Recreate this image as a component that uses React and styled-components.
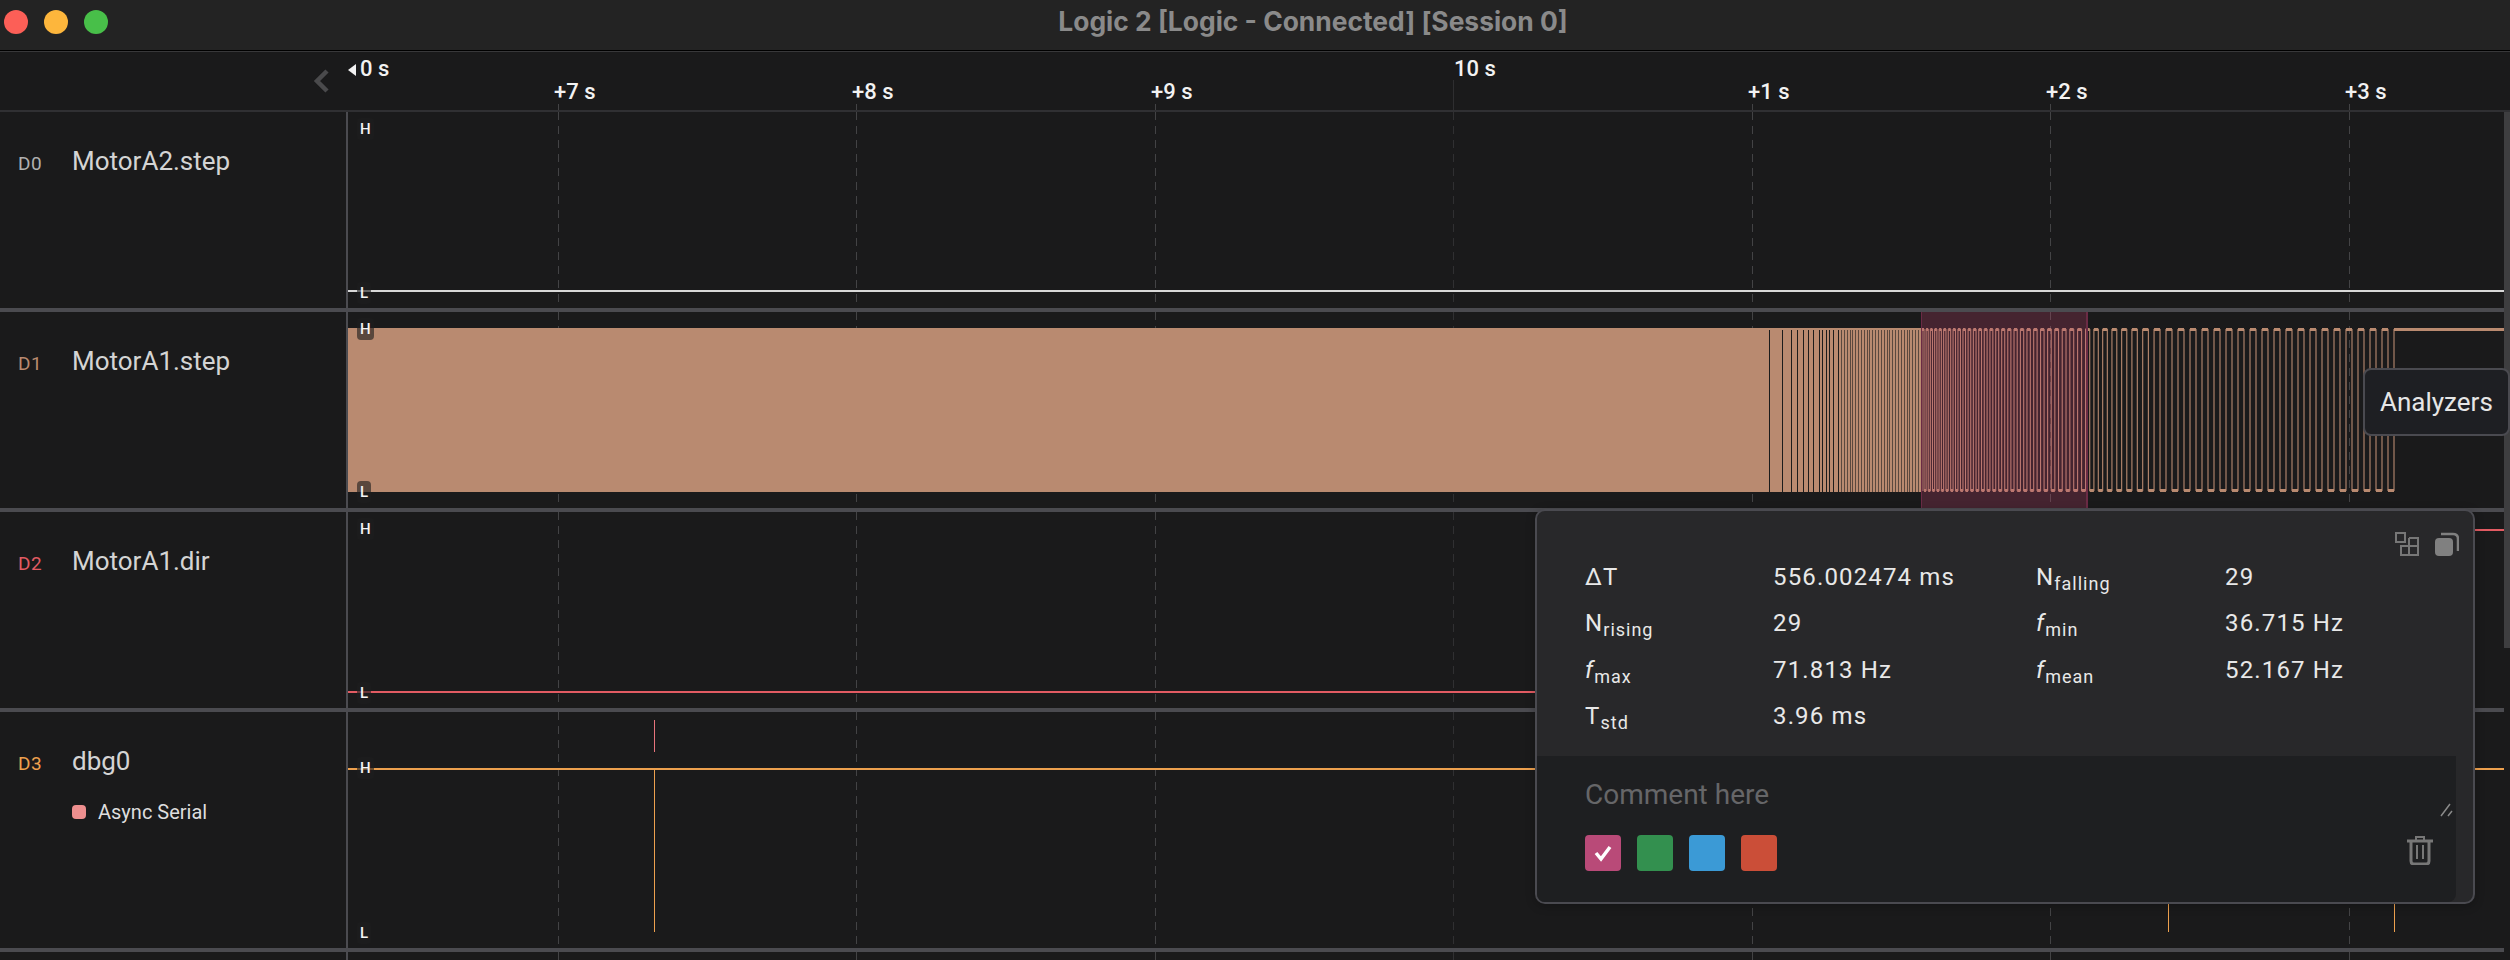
import React from "react";
import styled, { createGlobalStyle } from "styled-components";

const GRID_X = [558, 856, 1155, 1453, 1752, 2050, 2349];

const GlobalStyle = createGlobalStyle`
  html, body { margin: 0; padding: 0; background: #1a1a1b; }
  body { font-family: Roboto, "Liberation Sans", sans-serif; }
`;

const Page = styled.div`
  position: relative;
  width: 2510px;
  height: 960px;
  overflow: hidden;
  background: #1a1a1b;
  display: flex;
  flex-direction: column;
`;

const TitleBar = styled.div`
  height: 50px;
  flex: none;
  background: #232323;
  border-bottom: 1px solid #000;
  box-shadow: 0 1px 0 #38383a;
  display: flex;
  align-items: center;
  padding-left: 4px;
  gap: 16px;
  position: relative;
  z-index: 2;
`;

const Light = styled.span`
  width: 24px;
  height: 24px;
  border-radius: 50%;
  background: ${(p) => p.$color};
  margin-top: -6px;
`;

const Title = styled.div`
  position: absolute;
  left: 0;
  right: 0;
  top: 6px;
  text-align: center;
  padding-left: 116px;
  font-family: Inter, sans-serif;
  font-size: 26.4px;
  line-height: 30px;
  font-weight: 700;
  color: #8a8a8a;
`;

const Ruler = styled.div`
  position: relative;
  height: 58px;
  flex: none;
  margin-top: 1px;
  border-bottom: 2px solid #303033;
`;

const TimeLabel = styled.span`
  position: absolute;
  left: ${(p) => p.$x}px;
  top: ${(p) => p.$y}px;
  font-size: 22px;
  line-height: 26px;
  font-weight: 500;
  color: #f2f2f2;
`;

const Tick = styled.span`
  position: absolute;
  left: ${(p) => p.$x}px;
  bottom: 0;
  width: 1px;
  height: ${(p) => p.$h}px;
  background: ${(p) => p.$color};
`;

const Collapse = styled.svg`
  position: absolute;
  left: 312px;
  top: 17px;
`;

const StartMark = styled.svg`
  position: absolute;
  left: 348px;
  top: 11px;
`;

const Body = styled.div`
  flex: 1;
  display: flex;
  min-height: 0;
`;

const Tracks = styled.div`
  flex: 1;
  display: flex;
  flex-direction: column;
`;

const ScrollTrack = styled.div`
  width: 6px;
  flex: none;
`;

const ScrollThumb = styled.div`
  height: 536px;
  background: #3e3e40;
`;

const Row = styled.div`
  display: flex;
  flex: ${(p) => (p.$h ? "none" : "1")};
  height: ${(p) => (p.$h ? `${p.$h}px` : "auto")};
  box-sizing: border-box;
  border-bottom: ${(p) => (p.$h ? "4px solid #4b4b50" : "none")};
`;

const LabelCol = styled.div`
  width: 346px;
  flex: none;
  box-sizing: border-box;
  padding: 34px 0 0 18px;
`;

const Divider = styled.div`
  width: 2px;
  flex: none;
  background: #4b4b50;
`;

const NameLine = styled.div`
  display: flex;
  align-items: baseline;
  line-height: 30px;
`;

const Channel = styled.span`
  width: 54px;
  font-size: 19px;
  color: ${(p) => p.$color};
  letter-spacing: 0.6px;
`;

const Name = styled.span`
  font-size: 26px;
  color: #d4d4d4;
`;

const AnalyzerLine = styled.div`
  display: flex;
  align-items: center;
  gap: 12px;
  margin: 21px 0 0 54px;
  line-height: 24px;
  font-size: 20px;
  color: #dedede;
`;

const AnalyzerDot = styled.span`
  width: 14px;
  height: 14px;
  border-radius: 4px;
  background: #ee8f8f;
`;

const Trace = styled.div`
  position: relative;
  flex: 1;
  min-width: 0;
`;

const TraceSvg = styled.svg`
  display: block;
  width: 100%;
  height: 100%;
`;

const LevelTag = styled.span`
  position: absolute;
  left: 9px;
  top: ${(p) => p.$y - 11}px;
  height: 22px;
  padding: 0 3px;
  border-radius: 4px;
  background: rgba(30, 30, 30, 0.62);
  font-size: 15px;
  line-height: 22px;
  font-weight: 500;
  color: #f4f4f4;
`;

const Tooltip = styled.div`
  position: absolute;
  left: 2363px;
  top: 368px;
  width: 147px;
  height: 68px;
  box-sizing: border-box;
  background: #1e1f23;
  border: 2px solid #4a4a50;
  border-radius: 8px;
  padding-left: 15px;
  font-size: 26px;
  line-height: 64px;
  color: #e6e6e6;
`;

const Popup = styled.div`
  position: absolute;
  left: 1535px;
  top: 509px;
  width: 940px;
  height: 395px;
  box-sizing: border-box;
  background: #28282a;
  border: 2px solid #4a4a50;
  border-radius: 10px;
  display: flex;
  flex-direction: column;
  box-shadow: 0 2px 10px rgba(0, 0, 0, 0.25);
`;

const PopupTools = styled.div`
  position: absolute;
  top: 21px;
  right: 14px;
  display: flex;
  gap: 16px;
`;

const Stats = styled.div`
  display: grid;
  grid-template-columns: 188px 263px 189px 1fr;
  grid-auto-rows: 46.3px;
  padding: 43px 0 0 48px;
  font-size: 24px;
  line-height: 46px;
  letter-spacing: 1.15px;
  color: #e8e8e8;
`;

const Sub = styled.span`
  position: relative;
  top: 5px;
  font-size: 18px;
  letter-spacing: 1px;
`;

const Ital = styled.i`
  font-style: italic;
`;

const CommentBox = styled.div`
  position: relative;
  margin: auto 17px 0 0;
  height: 146px;
  background: #1e1f21;
  border-bottom-left-radius: 8px;
  border-bottom-right-radius: 8px;
  box-sizing: border-box;
  padding: 21px 0 0 48px;
`;

const CommentHint = styled.div`
  font-size: 28px;
  line-height: 36px;
  color: #666668;
`;

const Swatches = styled.div`
  display: flex;
  gap: 16px;
  margin-top: 22px;
`;

const Swatch = styled.span`
  width: 36px;
  height: 36px;
  border-radius: 4px;
  background: ${(p) => p.$color};
  display: flex;
  align-items: center;
  justify-content: center;
`;

const ResizeGrip = styled.svg`
  position: absolute;
  right: 2px;
  top: 47px;
`;

const TrashIcon = styled.svg`
  position: absolute;
  right: 22px;
  top: 79px;
`;

// step rise positions on D1, read off the ramp, the last one stays high
function risingEdges() {
  const edges = [];
  let x = 2394;
  while (x > 1921) {
    edges.unshift(x);
    let p = 12;
    if (x < 2087) p = 4 + ((x - 1921) / 166) * 4;
    else if (x < 2167) p = 8 + ((x - 2087) / 80) * 4;
    x -= p;
  }
  return edges;
}

const DARK_GAPS = [1769, 1782, 1791, 1797, 1803, 1808, 1813, 1819, 1822, 1826, 1829, 1833, 1838];
for (let x = 1841; x < 1921; x += 2.85) DARK_GAPS.push(Math.round(x));

function Grid({ h }) {
  return (
    <g>
      {GRID_X.map((x) => (
        <line
          key={x}
          x1={x + 0.5}
          x2={x + 0.5}
          y1={0}
          y2={h}
          stroke={x === 1453 ? "#303032" : "#434345"}
          strokeDasharray="8 6"
        />
      ))}
    </g>
  );
}

function StepWave() {
  const edges = risingEdges();
  let verticals = "";
  let caps = "";
  edges.forEach((x, i) => {
    const next = edges[i + 1];
    if (next === undefined) {
      verticals += `M${x} 179 V17 `;
      caps += `M${x} 17.5 H2504 `;
    } else {
      const fall = x + (next - x) / 2;
      verticals += `M${x} 179 V17 M${fall} 17 V179 `;
      caps += `M${x} 17.5 H${fall} M${fall} 178.5 H${next} `;
    }
  });
  return (
    <g>
      <rect x={348} y={16} width={1573} height={164} fill="#b98a70" />
      {DARK_GAPS.map((x) => (
        <rect key={x} x={x} y={18} width={1} height={162} fill="#1c1c1c" opacity={x > 1840 ? 0.6 : 1} />
      ))}
      <path d={verticals} fill="none" stroke="#b98a70" strokeWidth="1.1" shapeRendering="auto" />
      <path d={caps} fill="none" stroke="#b98a70" strokeWidth="3" shapeRendering="auto" />
      <rect x={1921} y={0} width={166} height={196} fill="rgba(198,66,110,0.25)" />
      <rect x={1921} y={0} width={1} height={196} fill="#6b2b45" />
      <rect x={2086} y={0} width={2} height={196} fill="#6b2b45" />
    </g>
  );
}

function TraceRow({ h, tags, children }) {
  return (
    <Trace>
      <TraceSvg viewBox={`348 0 2156 ${h}`} preserveAspectRatio="none" shapeRendering="crispEdges">
        <Grid h={h} />
        {children}
      </TraceSvg>
      {tags.map(([t, y]) => (
        <LevelTag key={t} $y={y}>
          {t}
        </LevelTag>
      ))}
    </Trace>
  );
}

const channels = [
  { id: "D0", name: "MotorA2.step", color: "#b0b0b0" },
  { id: "D1", name: "MotorA1.step", color: "#b98a70" },
  { id: "D2", name: "MotorA1.dir", color: "#e25b63" },
  { id: "D3", name: "dbg0", color: "#eda04e" },
];

function ChannelLabel({ ch, analyzer }) {
  return (
    <LabelCol>
      <NameLine>
        <Channel $color={ch.color}>{ch.id}</Channel>
        <Name>{ch.name}</Name>
      </NameLine>
      {analyzer && (
        <AnalyzerLine>
          <AnalyzerDot />
          {analyzer}
        </AnalyzerLine>
      )}
    </LabelCol>
  );
}

export default function App() {
  return (
    <Page>
      <GlobalStyle />
      <TitleBar>
        <Light $color="#fc5f57" />
        <Light $color="#fdb63c" />
        <Light $color="#48bf49" />
        <Title>Logic 2 [Logic - Connected] [Session 0]</Title>
      </TitleBar>

      <Ruler>
        <Collapse width="18" height="24" viewBox="0 0 18 24">
          <path d="M15 2 L5 12 L15 22" fill="none" stroke="#4a4a4c" strokeWidth="4.5" />
        </Collapse>
        <StartMark width="10" height="14" viewBox="0 0 10 14">
          <path d="M8 1 V13 L0 7 Z" fill="#f2f2f2" />
        </StartMark>
        <TimeLabel $x={360} $y={4}>0 s</TimeLabel>
        {[["+7 s", 0], ["+8 s", 1], ["+9 s", 2]].map(([t, i]) => (
          <TimeLabel key={t} $x={GRID_X[i] - 4} $y={27}>{t}</TimeLabel>
        ))}
        <TimeLabel $x={1454} $y={4}>10 s</TimeLabel>
        {[["+1 s", 4], ["+2 s", 5], ["+3 s", 6]].map(([t, i]) => (
          <TimeLabel key={t} $x={GRID_X[i] - 4} $y={27}>{t}</TimeLabel>
        ))}
        {GRID_X.map((x) => (
          <Tick key={x} $x={x} $h={x === 1453 ? 30 : 6} $color={x === 1453 ? "#2e2e30" : "#434345"} />
        ))}
      </Ruler>

      <Body>
        <Tracks>
          <Row $h={200}>
            <ChannelLabel ch={channels[0]} />
            <Divider />
            <TraceRow h={196} tags={[["H", 17], ["L", 181]]}>
              <rect x={348} y={178} width={2156} height={2} fill="#d8d8d8" />
            </TraceRow>
          </Row>
          <Row $h={200}>
            <ChannelLabel ch={channels[1]} />
            <Divider />
            <TraceRow h={196} tags={[["H", 17], ["L", 180]]}>
              <StepWave />
            </TraceRow>
          </Row>
          <Row $h={200}>
            <ChannelLabel ch={channels[2]} />
            <Divider />
            <TraceRow h={196} tags={[["H", 17], ["L", 181]]}>
              <path d="M348 179.5 H1700 V17.5 H2504" fill="none" stroke="#e25b63" strokeWidth="2" />
            </TraceRow>
          </Row>
          <Row $h={240}>
            <ChannelLabel ch={channels[3]} analyzer="Async Serial" />
            <Divider />
            <TraceRow h={236} tags={[["H", 56], ["L", 221]]}>
              <rect x={348} y={56} width={2156} height={2} fill="#eda04e" />
              <rect x={654} y={58} width={1} height={162} fill="#eda04e" />
              <rect x={2168} y={58} width={1} height={162} fill="#eda04e" />
              <rect x={2394} y={58} width={1} height={162} fill="#eda04e" />
              <rect x={654} y={8} width={1} height={32} fill="#e8747c" />
            </TraceRow>
          </Row>
          <Row>
            <LabelCol />
            <Divider />
            <TraceRow h={8} tags={[]} />
          </Row>
        </Tracks>
        <ScrollTrack>
          <ScrollThumb />
        </ScrollTrack>
      </Body>

      <Tooltip>Analyzers</Tooltip>

      <Popup>
        <PopupTools>
          <svg width="24" height="24" viewBox="0 0 24 24" fill="none" stroke="#777" strokeWidth="2">
            <rect x="1" y="1" width="9" height="9" />
            <path d="M14 6 H23 V23 H6 V14 H23 M14 6 V23" />
          </svg>
          <svg width="24" height="24" viewBox="0 0 24 24">
            <rect x="0" y="6" width="18" height="18" rx="4" fill="#808080" />
            <path d="M6 2 H18 Q23 2 23 7 V19" fill="none" stroke="#808080" strokeWidth="2.5" />
          </svg>
        </PopupTools>
        <Stats>
          <span>ΔT</span>
          <span>556.002474 ms</span>
          <span>N<Sub>falling</Sub></span>
          <span>29</span>
          <span>N<Sub>rising</Sub></span>
          <span>29</span>
          <span><Ital>f</Ital><Sub>min</Sub></span>
          <span>36.715 Hz</span>
          <span><Ital>f</Ital><Sub>max</Sub></span>
          <span>71.813 Hz</span>
          <span><Ital>f</Ital><Sub>mean</Sub></span>
          <span>52.167 Hz</span>
          <span>T<Sub>std</Sub></span>
          <span>3.96 ms</span>
        </Stats>
        <CommentBox>
          <CommentHint>Comment here</CommentHint>
          <Swatches>
            <Swatch $color="#b94a78">
              <svg width="20" height="20" viewBox="0 0 20 20">
                <path d="M3 10 L8 16 L17 4" fill="none" stroke="#fff" strokeWidth="3.5" />
              </svg>
            </Swatch>
            <Swatch $color="#33904f" />
            <Swatch $color="#3b9ad6" />
            <Swatch $color="#cb4e38" />
          </Swatches>
          <ResizeGrip width="14" height="14" viewBox="0 0 14 14">
            <path d="M1 13 L10 1 M8 13 L12 8" stroke="#8a8a8a" strokeWidth="1.5" />
          </ResizeGrip>
          <TrashIcon width="28" height="30" viewBox="0 0 28 30" fill="none" stroke="#777">
            <path d="M1 6 H27" strokeWidth="3" />
            <path d="M10 5 V2 H18 V5" strokeWidth="2" />
            <path d="M5 7 V26 Q5 29 8 29 H20 Q23 29 23 26 V7" strokeWidth="3" />
            <path d="M11 10 V24 M17 10 V24" strokeWidth="2" />
          </TrashIcon>
        </CommentBox>
      </Popup>
    </Page>
  );
}
